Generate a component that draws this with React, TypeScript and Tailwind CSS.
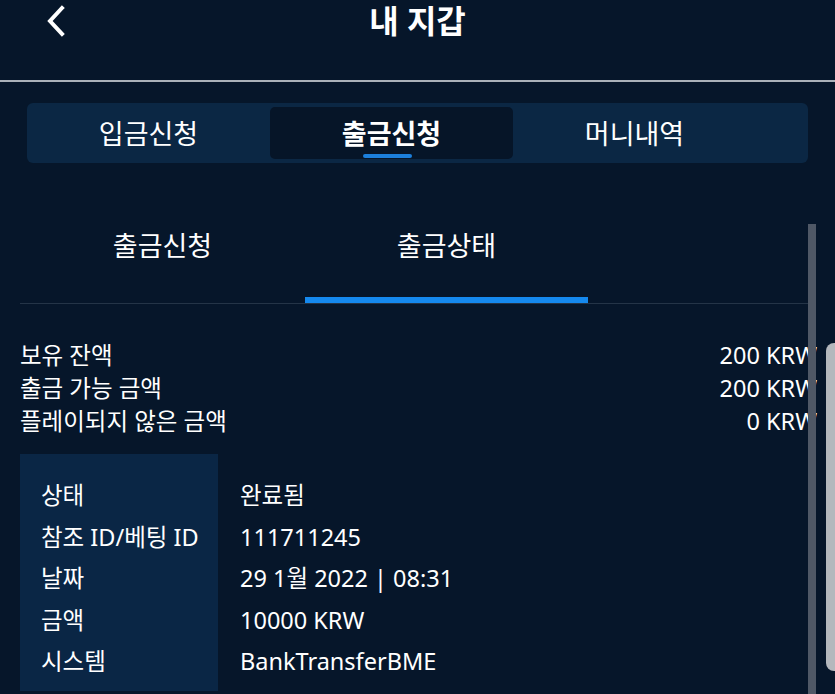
import React from "react";

const FONT = { fontFamily: '"Noto Sans", "Noto Sans CJK KR", sans-serif' };

const BALANCES = [
  ["보유 잔액", "200 KRW"],
  ["출금 가능 금액", "200 KRW"],
  ["플레이되지 않은 금액", "0 KRW"],
];

const DETAILS = [
  ["상태", "완료됨"],
  ["참조 ID/베팅 ID", "111711245"],
  ["날짜", "29 1월 2022 | 08:31"],
  ["금액", "10000 KRW"],
  ["시스템", "BankTransferBME"],
];

export default function App() {
  return (
    <div className="relative w-[835px] h-[694px] overflow-hidden bg-[#06162a] text-white" style={FONT}>
      {/* === HEADER === */}
      <header className="relative h-[82px] border-b-2 border-[#aab1b9]">
        <button className="absolute left-[42px] top-[4px] w-[28px] h-[34px] flex items-center justify-center">
          <svg width="22" height="32" viewBox="0 0 22 32" fill="none">
            <path d="M17 3 L5 16 L17 29" stroke="#fff" strokeWidth="4" strokeLinecap="square" />
          </svg>
        </button>
        <h1 className="text-center text-[32px] font-bold leading-[42px]">내 지갑</h1>
      </header>

      {/* === MAIN TABS === */}
      <div className="mx-[27px] mt-[21px] h-[60px] rounded-[6px] bg-[#0b2744] py-[4px] flex">
        <div className="w-[243px] flex items-center justify-center text-[27px] leading-none">입금신청</div>
        <div className="relative w-[243px] rounded-[5px] bg-[#061528] flex items-center justify-center text-[27px] font-bold leading-none">
          출금신청
          <span className="absolute left-[93px] bottom-[1px] w-[49px] h-[4px] rounded-full bg-[#1c7fdb]" />
        </div>
        <div className="w-[243px] flex items-center justify-center text-[27px] leading-none">머니내역</div>
      </div>

      {/* === SUB TABS === */}
      <div className="mx-[20px] mt-[60px] flex border-b border-[#243447] w-[796px]">
        <div className="w-[285px] h-[80px] pb-[36px] flex items-center justify-center text-[27px] leading-none">출금신청</div>
        <div className="relative w-[283px] h-[80px] pb-[36px] flex items-center justify-center text-[27px] leading-none">
          출금상태
          <span className="absolute left-0 right-0 bottom-0 h-[6px] bg-[#1589ee]" />
        </div>
      </div>

      {/* === BALANCES === */}
      <div className="mx-[20px] mt-[35px] w-[797px] text-[23.5px] leading-[33px]">
        {BALANCES.map(([label, value]) => (
          <div key={label} className="flex justify-between">
            <span>{label}</span>
            <span>{value}</span>
          </div>
        ))}
      </div>

      {/* === DETAILS === */}
      <div className="mx-[20px] mt-[16px] flex text-[23.5px]">
        <div className="w-[198px] bg-[#0a2645] pl-[21px] pt-[21px] pb-[8px]">
          {DETAILS.map(([label]) => (
            <div key={label} className="h-[41.5px] flex items-center whitespace-nowrap">{label}</div>
          ))}
        </div>
        <div className="pl-[22px] pt-[21px]">
          {DETAILS.map(([label, value]) => (
            <div key={label} className="h-[41.5px] flex items-center whitespace-nowrap">{value}</div>
          ))}
        </div>
      </div>

      {/* Scrollbar + popup edge overlays */}
      <div className="absolute left-[808px] top-[224px] bottom-0 w-[8px] bg-[#4f5866]" />
      <div className="absolute left-[826px] top-[343px] h-[328px] w-[20px] rounded-[8px] bg-[#b4b8bd]" />
    </div>
  );
}
